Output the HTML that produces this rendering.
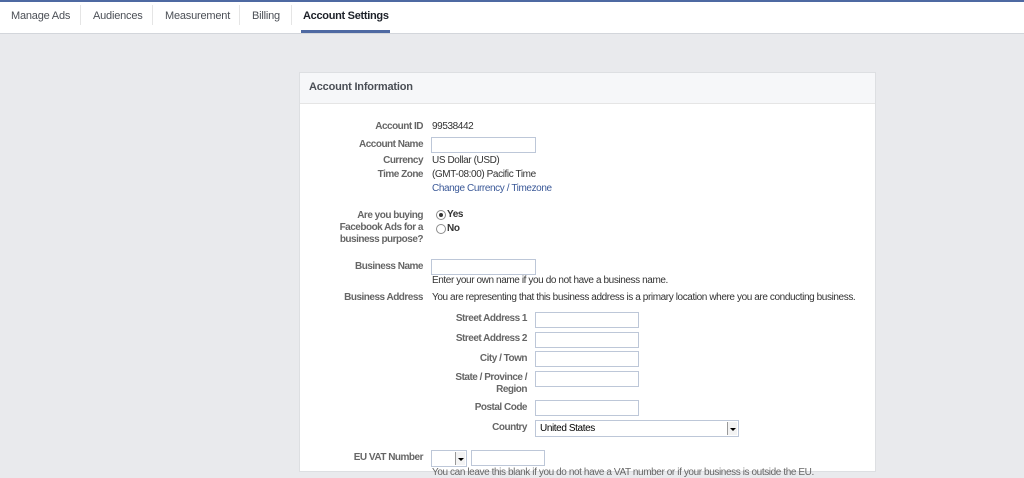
<!DOCTYPE html>
<html><head><style>
body{margin:0;width:1024px;height:471px;overflow:hidden;background:#e9eaed;font-family:"Liberation Sans",Arial,sans-serif;font-size:10px;letter-spacing:-0.4px;color:#333;position:relative}
.a{position:absolute;white-space:nowrap}
.l{position:absolute;text-align:right;font-weight:bold;color:#666;white-space:nowrap;letter-spacing:-0.5px}
.in{position:absolute;background:#fff;border:1px solid #bdc7d8;box-sizing:border-box;height:16px}
.sel{position:absolute;background:#fff;border:1px solid #bdc7d8;box-sizing:border-box;height:17px}
.sel .b{position:absolute;right:1px;top:1px;width:9px;height:13px;border-left:1px solid #999;background:#f3f3f3}
.sel .b:after{content:"";position:absolute;left:2px;top:6px;border-left:3px solid transparent;border-right:3px solid transparent;border-top:3px solid #000}
.r{position:absolute;width:10px;height:10px;border:1px solid #8c8c8c;border-radius:50%;background:#fff;box-sizing:border-box}
.t{position:absolute;top:10px;font-size:11px;letter-spacing:-0.2px;color:#4b4f56;white-space:nowrap}
</style></head><body>
<div class="a" style="left:0;top:0;width:1024px;height:2px;background:#4e69a2"></div>
<div class="a" style="left:0;top:2px;width:1024px;height:31px;background:#fff;border-bottom:1px solid #d3d6db"></div>
<div class="t" style="left:11px">Manage Ads</div>
<div class="a" style="left:80px;top:5px;width:1px;height:20px;background:#e5e5e5"></div>
<div class="t" style="left:93px">Audiences</div>
<div class="a" style="left:152px;top:5px;width:1px;height:20px;background:#e5e5e5"></div>
<div class="t" style="left:165px">Measurement</div>
<div class="a" style="left:239px;top:5px;width:1px;height:20px;background:#e5e5e5"></div>
<div class="t" style="left:252px">Billing</div>
<div class="a" style="left:291px;top:5px;width:1px;height:20px;background:#e5e5e5"></div>
<div class="t" style="left:303px;font-weight:bold;color:#1d2129;letter-spacing:-0.3px">Account Settings</div>
<div class="a" style="left:301px;top:30px;width:89px;height:3px;background:#4e69a2"></div>

<div class="a" style="left:299px;top:72px;width:577px;height:400px;background:#fff;border:1px solid #dddfe2;box-sizing:border-box"></div>
<div class="a" style="left:300px;top:73px;width:575px;height:30px;background:#f6f7f9;border-bottom:1px solid #e5e5e5"></div>
<div class="a" style="left:309px;top:81px;font-size:11px;letter-spacing:-0.2px;font-weight:bold;color:#4b4f56">Account Information</div>

<div class="l" style="right:601px;top:121px">Account ID</div><div class="a" style="left:432px;top:121px">99538442</div>
<div class="l" style="right:601px;top:139px">Account Name</div><div class="in" style="left:431px;top:137px;width:105px"></div>
<div class="l" style="right:601px;top:155px">Currency</div><div class="a" style="left:432px;top:155px">US Dollar (USD)</div>
<div class="l" style="right:601px;top:169px">Time Zone</div><div class="a" style="left:432px;top:169px">(GMT-08:00) Pacific Time</div>
<div class="a" style="left:432px;top:183px;color:#3b5998">Change Currency / Timezone</div>

<div class="l" style="right:601px;top:210px;line-height:12px">Are you buying<br>Facebook Ads for a<br>business purpose?</div>
<div class="r" style="left:436px;top:210px"><div style="position:absolute;left:2px;top:2px;width:4px;height:4px;border-radius:50%;background:#333"></div></div>
<div class="a" style="left:447px;top:209px;font-weight:bold">Yes</div>
<div class="r" style="left:436px;top:224px"></div>
<div class="a" style="left:447px;top:223px;font-weight:bold">No</div>

<div class="l" style="right:601px;top:261px">Business Name</div><div class="in" style="left:431px;top:259px;width:105px"></div>
<div class="a" style="left:432px;top:275px">Enter your own name if you do not have a business name.</div>
<div class="l" style="right:601px;top:292px">Business Address</div>
<div class="a" style="left:432px;top:292px">You are representing that this business address is a primary location where you are conducting business.</div>

<div class="l" style="right:497px;top:313px">Street Address 1</div><div class="in" style="left:535px;top:312px;width:104px"></div>
<div class="l" style="right:497px;top:333px">Street Address 2</div><div class="in" style="left:535px;top:332px;width:104px"></div>
<div class="l" style="right:497px;top:353px">City / Town</div><div class="in" style="left:535px;top:351px;width:104px"></div>
<div class="l" style="right:497px;top:372px;line-height:12px">State / Province /<br>Region</div><div class="in" style="left:535px;top:371px;width:104px"></div>
<div class="l" style="right:497px;top:402px">Postal Code</div><div class="in" style="left:535px;top:400px;width:104px"></div>
<div class="l" style="right:497px;top:422px">Country</div>
<div class="sel" style="left:535px;top:420px;width:204px"><span style="position:absolute;left:4px;top:2px;color:#000">United States</span><div class="b"></div></div>

<div class="l" style="right:601px;top:452px">EU VAT Number</div>
<div class="sel" style="left:431px;top:450px;width:36px"><div class="b"></div></div>
<div class="in" style="left:471px;top:450px;width:74px"></div>
<div class="a" style="left:432px;top:467px;color:#666">You can leave this blank if you do not have a VAT number or if your business is outside the EU.</div>
</body></html>
